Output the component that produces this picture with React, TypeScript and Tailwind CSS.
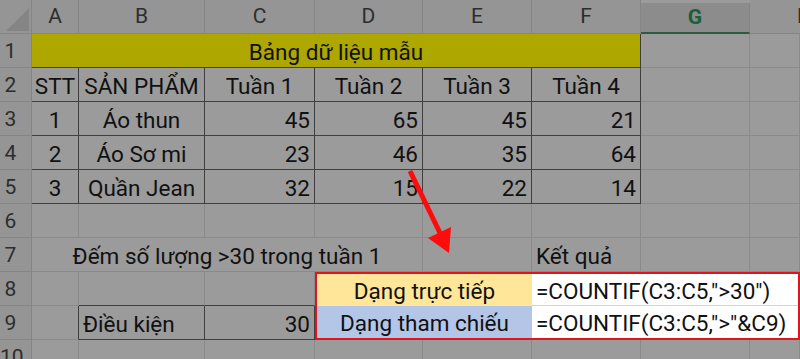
import type { ReactNode } from "react"

const grid = "border-r border-b border-[#8a8a8a]"
const dark = "border-r border-b border-[#3f3f3f]"

function Cell({ className = "", children }: { className?: string; children?: ReactNode }) {
  return <div className={`flex items-center overflow-visible whitespace-nowrap px-[4px] pt-[4px] ${className}`}>{children}</div>
}

function RowNum({ n }: { n: number }) {
  return (
    <div className={`flex items-center bg-[#959595] text-[#2d2d2d] text-[21px] pt-[2px] border-r border-b border-[#858585]`}>
      <span className="w-[21px] text-center">{n}</span>
    </div>
  )
}

function ColHead({ label, active = false, last = false }: { label: string; active?: boolean; last?: boolean }) {
  if (active) {
    return (
      <div className="flex items-center justify-center bg-[#8c8c8c] text-[#1d5e39] font-bold text-[21px] border-r border-[#858585] border-b-2 border-b-[#2f5a3f] mt-[3px]">
        {label}
      </div>
    )
  }
  if (last) {
    return (
      <div className="flex items-center justify-end bg-[#959595] text-[#2d2d2d] text-[21px] border-b border-[#858585]">
        <span className="mr-[-12px]">{label}</span>
      </div>
    )
  }
  return (
    <div className="flex items-center justify-center bg-[#959595] text-[#2d2d2d] text-[21px] border-r border-b border-[#858585]">
      {label}
    </div>
  )
}

const rows = [
  { n: 3, stt: "1", name: "Áo thun", v: ["45", "65", "45", "21"] },
  { n: 4, stt: "2", name: "Áo Sơ mi", v: ["23", "46", "35", "64"] },
  { n: 5, stt: "3", name: "Quần Jean", v: ["32", "15", "22", "14"] },
]

export default function App() {
  return (
    <div className="relative w-[800px] h-[359px] overflow-hidden bg-[#9b9b9b] font-['Roboto','Noto_Sans',sans-serif] text-[#111]">
      <div className="grid grid-cols-[32px_47px_126px_110px_108px_109px_109px_109px_1fr] grid-rows-[repeat(11,34px)] text-[22.5px]">
        {/* column headers */}
        <div className="relative bg-[#959595] border-r border-b border-[#858585]">
          <svg className="absolute left-0 top-0" width="32" height="34" viewBox="0 0 32 34">
            <polygon points="6,31 29,8 29,31" fill="#858585" />
          </svg>
        </div>
        <ColHead label="A" />
        <ColHead label="B" />
        <ColHead label="C" />
        <ColHead label="D" />
        <ColHead label="E" />
        <ColHead label="F" />
        <ColHead label="G" active />
        <ColHead label="H" last />

        {/* row 1 */}
        <RowNum n={1} />
        <Cell className="col-span-6 justify-center bg-[#aea700] border-r border-b border-r-[#3f3f3f] border-b-[#3f3f3f]">Bảng dữ liệu mẫu</Cell>
        <Cell className={grid} />
        <Cell className={grid} />

        {/* row 2 */}
        <RowNum n={2} />
        <Cell className={`justify-center ${dark}`}>STT</Cell>
        <Cell className={`justify-center ${dark}`}>SẢN PHẨM</Cell>
        <Cell className={`justify-center ${dark}`}>Tuần 1</Cell>
        <Cell className={`justify-center ${dark}`}>Tuần 2</Cell>
        <Cell className={`justify-center ${dark}`}>Tuần 3</Cell>
        <Cell className={`justify-center ${dark}`}>Tuần 4</Cell>
        <Cell className={grid} />
        <Cell className={grid} />

        {rows.map((r) => (
          <div key={r.n} className="contents">
            <RowNum n={r.n} />
            <Cell className={`justify-center ${dark}`}>{r.stt}</Cell>
            <Cell className={`justify-center ${dark}`}>{r.name}</Cell>
            {r.v.map((v, i) => (
              <Cell key={i} className={`justify-end ${dark}`}>{v}</Cell>
            ))}
            <Cell className={grid} />
            <Cell className={grid} />
          </div>
        ))}

        {/* row 6 */}
        <RowNum n={6} />
        {Array.from({ length: 8 }).map((_, i) => (
          <Cell key={i} className={grid} />
        ))}

        {/* row 7 */}
        <RowNum n={7} />
        <Cell className={`col-span-4 justify-center ${grid}`}>Đếm số lượng &gt;30 trong tuần 1</Cell>
        <Cell className={grid} />
        <Cell className={grid}>Kết quả</Cell>
        <Cell className={grid} />
        <Cell className={grid} />

        {/* highlighted block D8:H9 */}
        <div className="col-start-5 col-end-10 row-start-9 row-end-11 grid grid-cols-[215px_1fr] grid-rows-2 border-2 border-[#e0141c]">
          <Cell className="justify-center bg-[#ffe699]">Dạng trực tiếp</Cell>
          <Cell className="bg-white border-b border-[#d4d4d4]">=COUNTIF(C3:C5,"&gt;30")</Cell>
          <Cell className="justify-center bg-[#b4c6e7]">Dạng tham chiếu</Cell>
          <Cell className="bg-white">=COUNTIF(C3:C5,"&gt;"&amp;C9)</Cell>
        </div>

        {/* row 8 */}
        <RowNum n={8} />
        <Cell className={grid} />
        <Cell className="border-r border-[#8a8a8a] border-b border-b-[#3f3f3f]" />
        <Cell className="border-r border-[#8a8a8a] border-b border-b-[#3f3f3f]" />

        {/* row 9 */}
        <RowNum n={9} />
        <Cell className="border-b border-[#8a8a8a] border-r border-r-[#3f3f3f]" />
        <Cell className={dark}>Điều kiện</Cell>
        <Cell className={`justify-end ${dark}`}>30</Cell>

        {/* row 10 */}
        <RowNum n={10} />
        {Array.from({ length: 8 }).map((_, i) => (
          <Cell key={i} className={grid} />
        ))}
      </div>

      {/* red arrow */}
      <svg className="absolute left-0 top-0 pointer-events-none" width="800" height="359">
        <line x1="410" y1="171" x2="441" y2="235" stroke="#ff0b0b" strokeWidth="5" />
        <polygon points="428,238 451,227 449,253" fill="#ff0b0b" />
      </svg>
    </div>
  )
}
